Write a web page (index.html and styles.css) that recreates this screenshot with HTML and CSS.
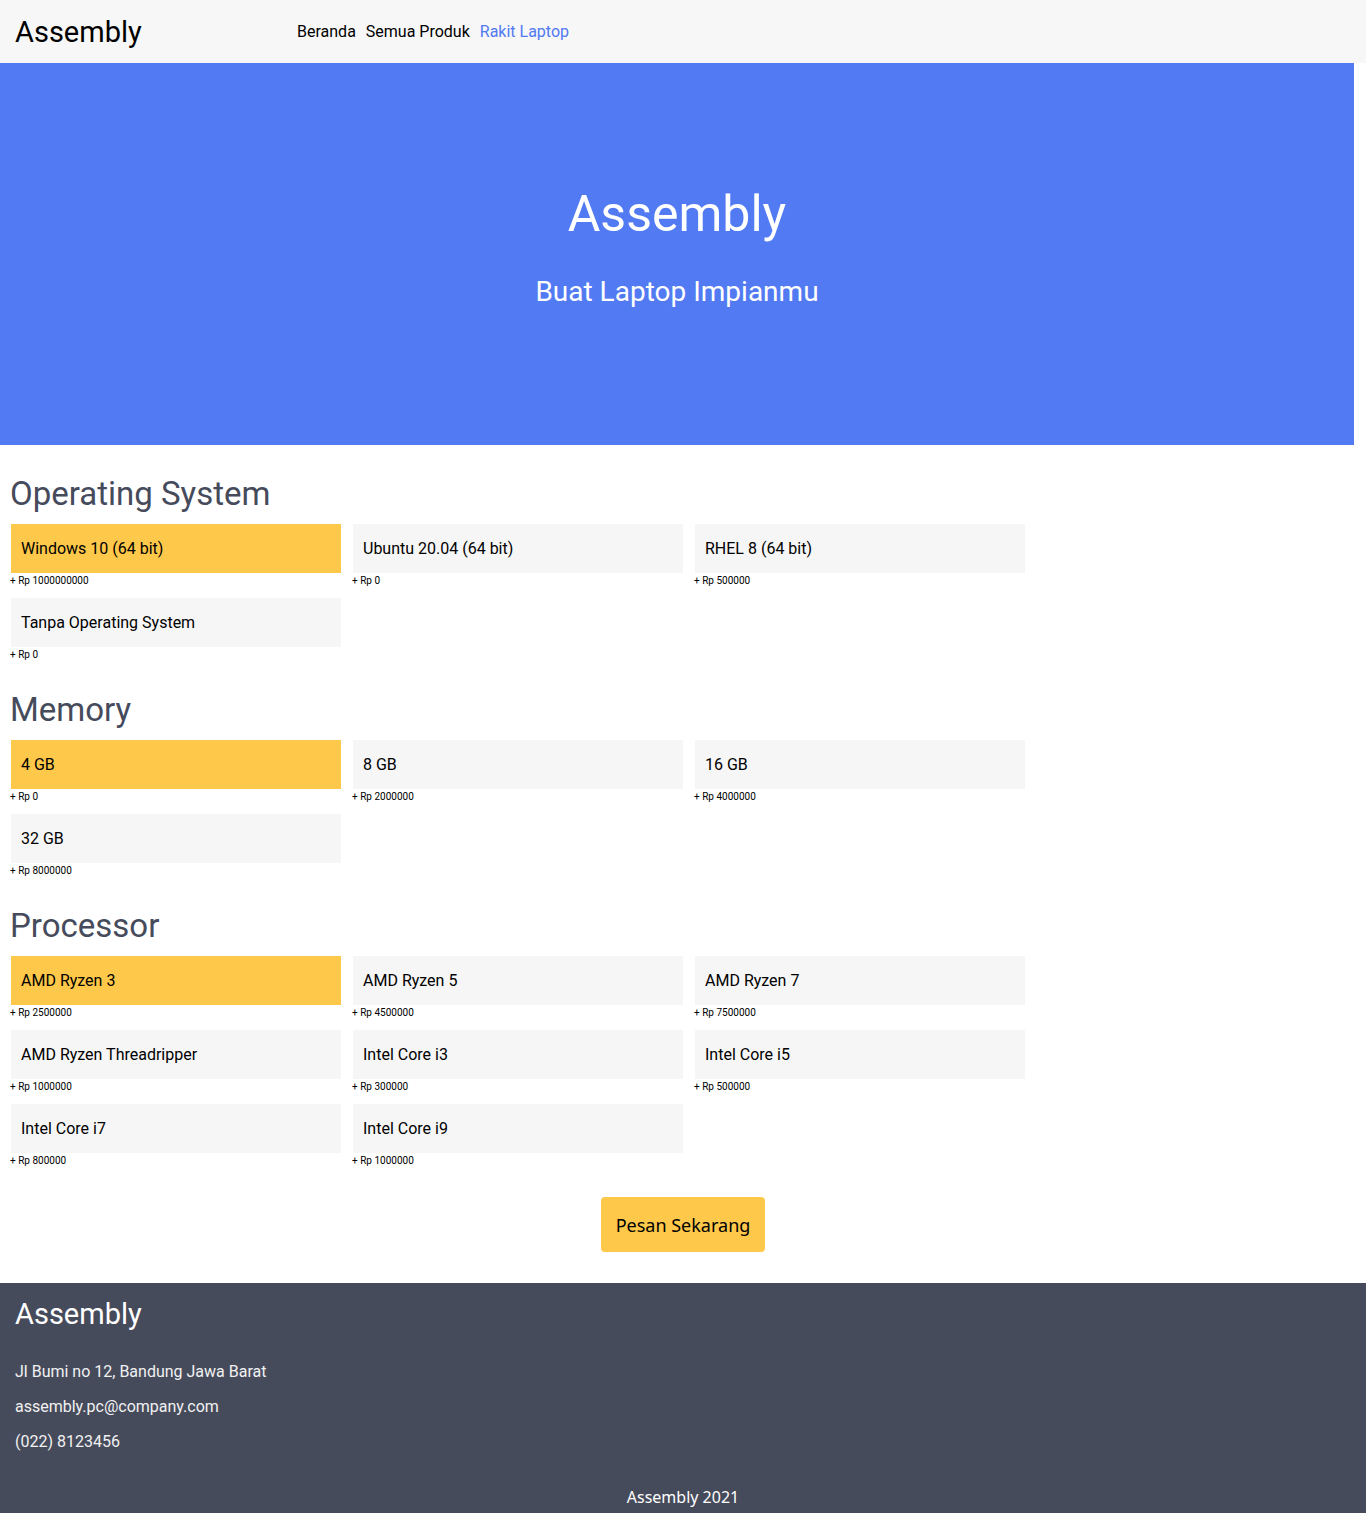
FILE: index.html
```html
<!DOCTYPE html>
<html lang="id">
<head>
<meta charset="utf-8">
<title>Assembly - Rakit Laptop</title>
<link rel="stylesheet" href="styles.css">
</head>
<body>
<header class="navbar">
  <div class="brand">Assembly</div>
  <nav class="nav">
    <a class="nav-link" href="#">Beranda</a>
    <a class="nav-link" href="#">Semua Produk</a>
    <a class="nav-link active" href="#">Rakit Laptop</a>
  </nav>
</header>

<section class="hero">
  <h1 class="hero-title">Assembly</h1>
  <p class="hero-sub">Buat Laptop Impianmu</p>
</section>

<main class="main">
  <section class="group">
    <h2 class="group-title">Operating System</h2>
    <div class="options">
      <div class="option"><div class="card selected">Windows 10 (64 bit)</div><div class="price">+ Rp 1000000000</div></div>
      <div class="option"><div class="card">Ubuntu 20.04 (64 bit)</div><div class="price">+ Rp 0</div></div>
      <div class="option"><div class="card">RHEL 8 (64 bit)</div><div class="price">+ Rp 500000</div></div>
      <div class="option"><div class="card">Tanpa Operating System</div><div class="price">+ Rp 0</div></div>
    </div>
  </section>

  <section class="group">
    <h2 class="group-title">Memory</h2>
    <div class="options">
      <div class="option"><div class="card selected">4 GB</div><div class="price">+ Rp 0</div></div>
      <div class="option"><div class="card">8 GB</div><div class="price">+ Rp 2000000</div></div>
      <div class="option"><div class="card">16 GB</div><div class="price">+ Rp 4000000</div></div>
      <div class="option"><div class="card">32 GB</div><div class="price">+ Rp 8000000</div></div>
    </div>
  </section>

  <section class="group">
    <h2 class="group-title">Processor</h2>
    <div class="options">
      <div class="option"><div class="card selected">AMD Ryzen 3</div><div class="price">+ Rp 2500000</div></div>
      <div class="option"><div class="card">AMD Ryzen 5</div><div class="price">+ Rp 4500000</div></div>
      <div class="option"><div class="card">AMD Ryzen 7</div><div class="price">+ Rp 7500000</div></div>
      <div class="option"><div class="card">AMD Ryzen Threadripper</div><div class="price">+ Rp 1000000</div></div>
      <div class="option"><div class="card">Intel Core i3</div><div class="price">+ Rp 300000</div></div>
      <div class="option"><div class="card">Intel Core i5</div><div class="price">+ Rp 500000</div></div>
      <div class="option"><div class="card">Intel Core i7</div><div class="price">+ Rp 800000</div></div>
      <div class="option"><div class="card">Intel Core i9</div><div class="price">+ Rp 1000000</div></div>
    </div>
  </section>

  <div class="actions">
    <button class="btn-order" type="button">Pesan Sekarang</button>
  </div>
</main>

<footer class="footer">
  <div class="footer-brand">Assembly</div>
  <p class="footer-line">Jl Bumi no 12, Bandung Jawa Barat</p>
  <p class="footer-line">assembly.pc@company.com</p>
  <p class="footer-line">(022) 8123456</p>
  <div class="copyright">Assembly 2021</div>
</footer>
</body>
</html>
```

FILE: styles.css
```css
* { box-sizing: border-box; }

body {
  margin: 0;
  font-family: Roboto, "Liberation Sans", sans-serif;
  color: #000;
  background: #fff;
}

.navbar {
  height: 63px;
  background: #f7f7f7;
  display: flex;
  align-items: center;
  padding-left: 15px;
}

.brand {
  width: 282px;
  font-size: 29px;
  line-height: 34px;
}

.nav {
  display: flex;
  gap: 10px;
}

.nav-link {
  font-size: 16px;
  color: #000;
  text-decoration: none;
}

.nav-link.active { color: #5179f2; }

.hero {
  margin-right: 12px;
  height: 382px;
  background: #527af2;
  color: #fff;
  text-align: center;
  padding-top: 123px;
}

.hero-title {
  margin: 0;
  font-size: 50px;
  font-weight: 400;
  line-height: 56px;
}

.hero-sub {
  margin: 35px 0 0;
  font-size: 28px;
  line-height: 30px;
}

.main {
  padding: 30px 11px 0;
}

.group + .group { margin-top: 31px; }

.group-title {
  margin: 0 0 12px -1px;
  font-size: 33px;
  font-weight: 400;
  line-height: 37px;
  color: #464b5c;
}

.options {
  display: grid;
  grid-template-columns: repeat(3, 330px);
  column-gap: 12px;
  row-gap: 12px;
}

.card {
  height: 49px;
  display: flex;
  align-items: center;
  padding: 0 10px;
  background: #f6f6f6;
  font-size: 16px;
}

.card.selected { background: #fec84a; }

.price {
  height: 13px;
  font-size: 10px;
  line-height: 13px;
  padding-top: 1px;
  margin-left: -1px;
}

.actions {
  display: flex;
  justify-content: center;
  margin: 31px 0 31px;
}

.btn-order {
  height: 55px;
  padding: 0 15px;
  border: none;
  border-radius: 4px;
  background: #fec84a;
  color: #000;
  font-family: "Noto Sans", "Open Sans", sans-serif;
  font-size: 18px;
  cursor: pointer;
}

.footer {
  background: #464b5c;
  color: #f1f1f1;
  padding: 14px 15px 20px;
}

.footer-brand {
  font-size: 29px;
  line-height: 34px;
  color: #fff;
}

.footer-line {
  margin: 16px 0 0;
  font-size: 16px;
  line-height: 19px;
}

.footer-brand + .footer-line { margin-top: 31px; }

.copyright {
  margin-top: 35px;
  text-align: center;
  font-family: "Noto Sans", "Open Sans", sans-serif;
  font-size: 16px;
  line-height: 22px;
  color: #fff;
}
```
